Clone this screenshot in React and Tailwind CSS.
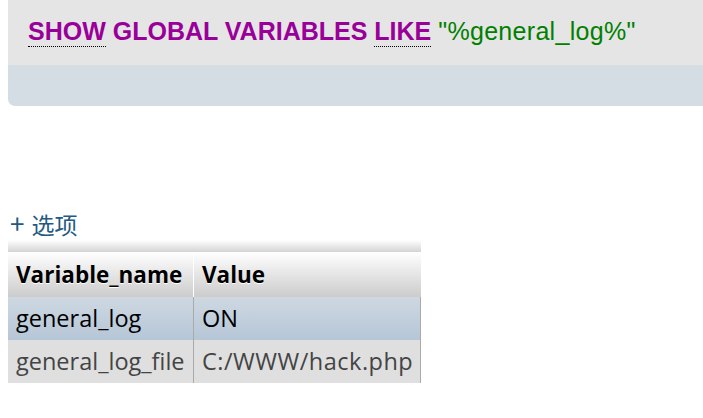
export default function App() {
  const sans = { fontFamily: '"Open Sans", "Noto Sans", sans-serif' };
  return (
    <div className="w-[703px] h-[418px] bg-white overflow-hidden relative">
      <div className="ml-[8px] rounded-bl-[7px] overflow-hidden">
        <div className="h-[65px] bg-[#e5e5e5] pl-[20px] pt-[16px]">
          <div
            className="text-[25px] leading-[30px] whitespace-nowrap"
            style={{ fontFamily: '"Liberation Sans", Arial, sans-serif' }}
          >
            <span className="font-bold text-[#990099] border-b border-dotted border-black pb-[1px]">SHOW</span>{' '}
            <span className="font-bold text-[#990099]">GLOBAL VARIABLES</span>{' '}
            <span className="font-bold text-[#990099] border-b border-dotted border-black pb-[1px]">LIKE</span>{' '}
            <span className="text-[#008000] tracking-[0.3px]">"%general_log%"</span>
          </div>
        </div>
        <div className="h-[41px] bg-[#d3dde3]"></div>
      </div>

      <div className="mt-[104px] ml-[10px] h-[28px] text-[23px] leading-[28px] text-[#235a81] whitespace-nowrap" style={{ fontFamily: '"Noto Sans CJK SC", "Noto Sans", sans-serif' }}>
        <span className="text-[26px] leading-[20px] mr-[7px]">+</span>选项
      </div>

      <div className="ml-[8px] mt-[2px] w-[413px]" style={sans}>
        <div className="h-[12px] bg-gradient-to-b from-[#ffffff] to-[#d4d4d4]"></div>
        <div className="flex h-[45px] bg-gradient-to-b from-[#ffffff] to-[#cccccc] text-black font-bold text-[22.5px]">
          <div className="w-[186px] flex items-center pl-[8px] border-r border-white [text-shadow:0_1px_0_#fff]">Variable_name</div>
          <div className="flex-1 flex items-center pl-[8px] [text-shadow:0_1px_0_#fff]">Value</div>
        </div>
        <div className="flex h-[43px] bg-gradient-to-b from-[#ced8e1] to-[#b6c6d7] text-black text-[23.5px] border-r border-[#aaaaaa]">
          <div className="w-[186px] flex items-center pl-[8px] border-r border-[#aaaaaa]">general_log</div>
          <div className="flex-1 flex items-center pl-[8px]">ON</div>
        </div>
        <div className="flex h-[43px] bg-[#dfdfdf] text-[#444444] text-[23.5px] border-r border-[#aaaaaa]">
          <div className="w-[186px] flex items-center pl-[8px] border-r border-[#aaaaaa] whitespace-nowrap">general_log_file</div>
          <div className="flex-1 flex items-center pl-[8px] whitespace-nowrap tracking-[0.5px]">C:/WWW/hack.php</div>
        </div>
      </div>
    </div>
  );
}
